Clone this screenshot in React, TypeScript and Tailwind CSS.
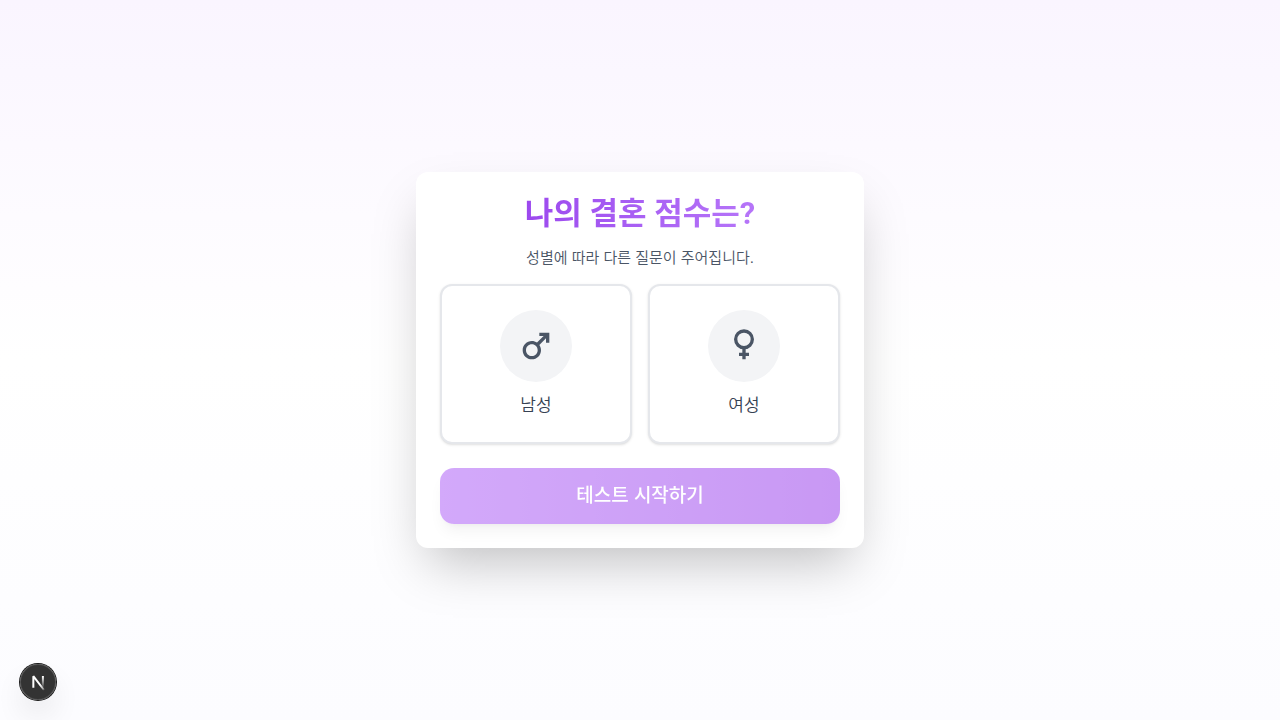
import { useState } from "react";
import { MdMale } from "react-icons/md";

function FemaleIcon({ size }: { size: number }) {
  return (
    <svg width={size} height={size} viewBox="0 0 24 24" fill="none" stroke="currentColor" strokeWidth="2">
      <circle cx="12" cy="8" r="5" />
      <path d="M12 13v7M9 17h6" />
    </svg>
  );
}

const genders = [
  { id: "male", label: "남성", Icon: MdMale },
  { id: "female", label: "여성", Icon: FemaleIcon },
];

function DevBadge() {
  return (
    <button
      type="button"
      aria-label="Open Next.js Dev Tools"
      className="fixed bottom-5 left-5 flex size-9 items-center justify-center rounded-full bg-black/80 shadow-[0_0_0_1px_#171717,inset_0_0_0_1px_rgba(255,255,255,0.14),0_16px_32px_-8px_rgba(0,0,0,0.24)]"
    >
      <svg width="40" height="40" viewBox="0 0 40 40" fill="none" className="shrink-0">
        <defs>
          <linearGradient id="diag" x1="9.2" y1="10" x2="13.6" y2="15.6" gradientUnits="userSpaceOnUse">
            <stop stopColor="white" />
            <stop offset="0.6" stopColor="white" stopOpacity="0.6" />
            <stop offset="1" stopColor="white" stopOpacity="0" />
          </linearGradient>
          <linearGradient id="stem" x1="11.8" y1="1.4" x2="11.8" y2="13" gradientUnits="userSpaceOnUse">
            <stop stopColor="white" />
            <stop offset="1" stopColor="white" stopOpacity="0" />
          </linearGradient>
        </defs>
        <g transform="translate(13 13)">
          <path d="M13 15L2.34 1.2V12.8" stroke="url(#diag)" strokeWidth="2" strokeLinejoin="bevel" />
          <path d="M11.9 1V12" stroke="url(#stem)" strokeWidth="2" />
        </g>
      </svg>
    </button>
  );
}

export default function App() {
  const [selected, setSelected] = useState<string | null>(null);

  return (
    <main className="flex min-h-screen items-center justify-center bg-linear-to-b from-[#faf5ff] via-white to-[#fcfcff] p-4 font-['Liberation_Sans','Noto_Sans_CJK_KR',sans-serif]">
      <section className="w-full max-w-md rounded-xl bg-white p-6 shadow-2xl">
        <h1 className="bg-linear-to-r from-[#9333ea] to-[#c084fc] bg-clip-text text-center font-['Roboto','Noto_Sans_CJK_KR',sans-serif] text-[31px] leading-9 font-bold text-transparent">
          나의 결혼 점수는?
        </h1>
        <p className="mt-4 text-center text-[15px] leading-5 font-[350] text-gray-600">
          성별에 따라 다른 질문이 주어집니다.
        </p>
        <div className="mt-4 grid grid-cols-2 gap-4">
          {genders.map(({ id, label, Icon }) => (
            <button
              key={id}
              type="button"
              aria-pressed={selected === id}
              onClick={() => setSelected(id)}
              className="flex flex-col items-center gap-3 rounded-xl border-2 border-gray-200 bg-white p-6 shadow-sm"
            >
              <span className="rounded-full bg-gray-100 p-4 text-gray-600">
                <Icon size={40} />
              </span>
              <span className="text-[17px] leading-6 font-[350] text-gray-700">{label}</span>
            </button>
          ))}
        </div>
        <button
          type="button"
          disabled={!selected}
          className="mt-6 h-14 w-full rounded-[14px] bg-linear-to-r from-[#a855f7] to-[#9333ea] text-[19px] font-medium text-white shadow-lg disabled:opacity-50"
        >
          테스트 시작하기
        </button>
      </section>
      <DevBadge />
    </main>
  );
}
